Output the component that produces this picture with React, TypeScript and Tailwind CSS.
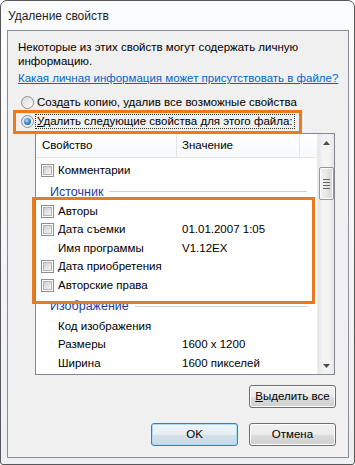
import React from 'react'

const rows: Array<
  | { kind: 'item'; label: string; value?: string; check?: boolean }
  | { kind: 'group'; label: string }
> = [
  { kind: 'item', label: 'Комментарии', check: true },
  { kind: 'group', label: 'Источник' },
  { kind: 'item', label: 'Авторы', check: true },
  { kind: 'item', label: 'Дата съемки', value: '01.01.2007 1:05', check: true },
  { kind: 'item', label: 'Имя программы', value: 'V1.12EX' },
  { kind: 'item', label: 'Дата приобретения', check: true },
  { kind: 'item', label: 'Авторские права', check: true },
  { kind: 'group', label: 'Изображение' },
  { kind: 'item', label: 'Код изображения' },
  { kind: 'item', label: 'Размеры', value: '1600 x 1200' },
  { kind: 'item', label: 'Ширина', value: '1600 пикселей' },
]

function Checkbox() {
  return (
    <span className="w-[13px] h-[13px] shrink-0 border border-[#8f8f8f] bg-white p-[1px] flex">
      <span className="flex-1 border border-[#b4b4b4] bg-[linear-gradient(135deg,#cfcfcf,#f6f6f6)]" />
    </span>
  )
}

function Radio({ checked }: { checked?: boolean }) {
  return (
    <span className="w-[13px] h-[13px] shrink-0 rounded-full border border-[#8f8f8f] bg-[linear-gradient(135deg,#d8d8d8,#ffffff)] flex items-center justify-center">
      {checked && (
        <span className="w-[7px] h-[7px] rounded-full bg-[radial-gradient(circle_at_40%_35%,#a6dcfb,#2a78c2_60%,#14487f)]" />
      )}
    </span>
  )
}

function Button({ children, primary }: { children: React.ReactNode; primary?: boolean }) {
  return (
    <button
      className={
        primary
          ? 'w-[87px] h-[23px] rounded-[3px] border border-[#3c7fb1] bg-[linear-gradient(#f0f6fa,#e6eef4_50%,#d6e2ea_50%,#cbd8e2)] shadow-[inset_0_0_0_1px_#a9dcf5] text-[#000]'
          : 'w-[87px] h-[23px] rounded-[3px] border border-[#707070] bg-[linear-gradient(#f2f2f2,#ebebeb_50%,#dddddd_50%,#cfcfcf)] shadow-[inset_0_0_0_1px_#fcfcfc] text-[#000]'
      }
    >
      {children}
    </button>
  )
}

function Arrow({ up }: { up?: boolean }) {
  return (
    <svg width="7" height="4" viewBox="0 0 7 4">
      <path d={up ? 'M0 4 L3.5 0 L7 4 Z' : 'M0 0 L3.5 4 L7 0 Z'} fill="#4d4d4d" />
    </svg>
  )
}

export default function App() {
  return (
    <div className="w-[355px] h-[465px] relative overflow-hidden rounded-t-[7px] rounded-b-[3px] border border-[#575757] bg-[linear-gradient(#fbfcfd,#eceff3)] font-['Segoe_UI','Liberation_Sans',sans-serif] text-[11.5px] text-[#000] whitespace-nowrap flex flex-col">
      {/* Title */}
      <div className="h-[29px] pl-[7px] flex items-center text-[12px] text-[#1e1e1e]">
        Удаление свойств
      </div>

      {/* Client area */}
      <div className="ml-[6px] mr-[5px] mb-[6px] flex-1 border border-[#8a8d92] bg-[#f0f0f0] flex flex-col">
        <div className="pl-[10px] pt-[9px] leading-[14px]">
          <p>Некоторые из этих свойств могут содержать личную</p>
          <p>информацию.</p>
          <p className="mt-[3px] text-[#0066cc] underline">
            Какая личная информация может присутствовать в файле?
          </p>
        </div>

        <div className="mt-[8px] pl-[13px] h-[19px] flex items-center gap-[3px]">
          <Radio />
          <span>
            Созд<span className="underline">а</span>ть копию, удалив все возможные свойства
          </span>
        </div>
        <div className="pl-[13px] h-[19px] flex items-center gap-[2px]">
          <Radio checked />
          <span className="outline outline-1 outline-dotted outline-[#333] px-[1px] leading-[13px]">
            <span className="underline">У</span>далить следующие свойства для этого файла:
          </span>
        </div>

        {/* List view */}
        <div className="mt-[2px] ml-[27px] mr-[13px] h-[242px] border border-[#828790] bg-white flex overflow-hidden">
          <div className="flex-1 flex flex-col min-w-0">
            <div className="h-[24px] shrink-0 flex border-b border-[#e5e5e5] bg-[linear-gradient(#ffffff,#f7f8fa)]">
              <div className="w-[141px] pl-[6px] flex items-center border-r border-[#e5e5e5]">
                Свойство
              </div>
              <div className="w-[123px] pl-[5px] flex items-center border-r border-[#e5e5e5]">
                Значение
              </div>
              <div className="flex-1" />
            </div>
            <div className="pt-[3px] flex-1 overflow-hidden">
              {rows.map((r) =>
                r.kind === 'group' ? (
                  <div key={r.label} className="h-[23px] pl-[14px] pr-[10px] pt-[2px] flex items-center gap-[6px]">
                    <span className="text-[#1e3ba0] text-[12.5px]">{r.label}</span>
                    <span className="flex-1 h-px bg-[#c9d0de]" />
                  </div>
                ) : (
                  <div key={r.label} className="h-[18.4px] flex items-center">
                    <div className="w-[141px] pl-[5px] flex items-center gap-[4px]">
                      {r.check ? <Checkbox /> : <span className="w-[13px]" />}
                      <span>{r.label}</span>
                    </div>
                    <div className="pl-[5px]">{r.value}</div>
                  </div>
                )
              )}
            </div>
          </div>

          {/* Scrollbar */}
          <div className="w-[17px] shrink-0 bg-[linear-gradient(90deg,#e6e6e6,#f3f3f3_30%,#f3f3f3_70%,#e6e6e6)] border-l border-[#ececec] flex flex-col items-center">
            <div className="h-[17px] flex items-center justify-center">
              <Arrow up />
            </div>
            <div className="mt-[16px] w-[15px] h-[33px] rounded-[2px] border border-[#979797] bg-[linear-gradient(90deg,#f2f2f2,#e6e6e6_50%,#d6d6d6)] shadow-[inset_0_0_0_1px_#fafafa] flex flex-col items-center justify-center gap-[2px]">
              <span className="w-[7px] h-px bg-[#666]" />
              <span className="w-[7px] h-px bg-[#666]" />
              <span className="w-[7px] h-px bg-[#666]" />
              <span className="w-[7px] h-px bg-[#666]" />
            </div>
            <div className="flex-1" />
            <div className="h-[17px] flex items-center justify-center">
              <Arrow />
            </div>
          </div>
        </div>

        <div className="mt-[10px] mr-[12px] flex justify-end">
          <Button>
            <span className="underline">В</span>ыделить все
          </Button>
        </div>

        <div className="mt-[15px] mr-[12px] flex justify-end gap-[11px]">
          <Button primary>OK</Button>
          <Button>Отмена</Button>
        </div>
      </div>

      {/* Orange highlight annotations */}
      <div className="absolute left-[12px] top-[109px] w-[289px] h-[24px] border-[3px] border-[#eb7a1e]" />
      <div className="absolute left-[31px] top-[196px] w-[283px] h-[107px] border-[3px] border-[#eb7a1e]" />
    </div>
  )
}
